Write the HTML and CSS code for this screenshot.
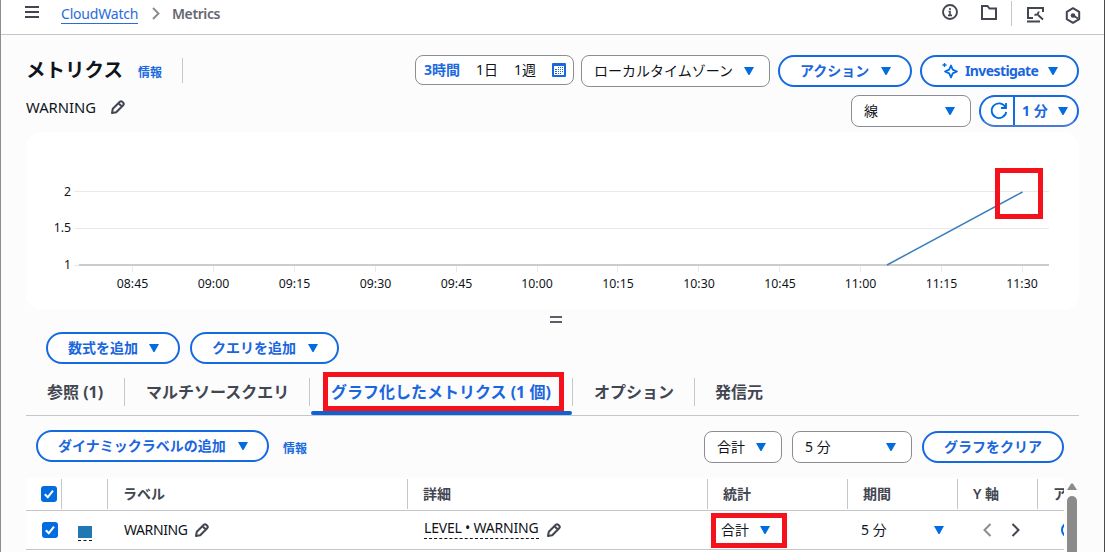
FILE: index.html
```
<!DOCTYPE html>
<html lang="ja">
<head>
    <meta charset="UTF-8">
    <meta name="viewport" content="width=device-width, initial-scale=1.0">
    <title>CloudWatch Metrics</title>
    <link rel="stylesheet" href="styles.css">
</head>
<body>
    <!-- Shared icons -->
    <svg class="sprite" width="0" height="0">
        <symbol id="caret" viewBox="0 0 10 8"><path d="M0 0h10L5.8 7.4q-.8 1-1.6 0z" fill="#006ce0"/></symbol>
        <symbol id="pencil" viewBox="0 0 16 16"><path d="M2 14l.8-4.2 7-7a1.7 1.7 0 0 1 2.4 0l1 1a1.7 1.7 0 0 1 0 2.4l-7 7zM8.5 4.2l3.3 3.3" fill="none" stroke="#424650" stroke-width="2" stroke-linejoin="round"/></symbol>
        <symbol id="check" viewBox="0 0 16 16"><path d="M3.8 8.2l3 3 5.2-6.6" fill="none" stroke="#fff" stroke-width="2"/></symbol>
    </svg>

    <div class="app">
        <header class="topbar">
            <svg class="menu" width="14" height="12" viewBox="0 0 14 12"><path d="M0 1h14M0 6h14M0 11h14" stroke="#424650" stroke-width="2"/></svg>
            <a class="crumb-link">CloudWatch</a>
            <svg class="crumb-arrow" width="8" height="13" viewBox="0 0 8 13"><path d="M1 1l5.5 5.5L1 12" fill="none" stroke="#8c8c94" stroke-width="2"/></svg>
            <span class="crumb-current">Metrics</span>
            <div class="top-icons">
                <svg class="icon-info" width="16" height="16" viewBox="0 0 16 16"><circle cx="8" cy="8" r="7" fill="none" stroke="#424650" stroke-width="1.9"/><path d="M8 4v2M6.5 7.5H8V11M6 11.4h4" fill="none" stroke="#424650" stroke-width="1.6"/></svg>
                <svg class="icon-folder" width="16" height="15" viewBox="0 0 16 15"><path d="M1 1h5.5l2 2.5H15V14H1z" fill="none" stroke="#424650" stroke-width="2"/></svg>
                <span class="top-divider"></span>
                <svg class="icon-screen" width="17" height="17" viewBox="0 0 17 17"><path d="M6 12H1V2h15v4M0 15.500h13" fill="none" stroke="#424650" stroke-width="2"/><path d="M11 9l5 4.500M7.500 8.500a2.800 2.800 0 0 0 4-3" fill="none" stroke="#424650" stroke-width="2"/></svg>
                <svg class="icon-hex" width="16" height="17" viewBox="0 0 16 17"><path d="M8 1.200l6.200 3.600v7.400L8 15.800l-6.200-3.600V4.800z" fill="none" stroke="#424650" stroke-width="2" stroke-linejoin="round"/><circle cx="8" cy="8.500" r="2.300" fill="#424650"/><path d="M8 8.500l5 3" stroke="#424650" stroke-width="2"/></svg>
            </div>
        </header>

        <main class="content">
            <div class="title-row">
                <h1>メトリクス</h1>
                <a class="info">情報</a>
                <span class="title-divider"></span>
                <div class="range">
                    <span class="range-item range-on">3時間</span>
                    <span class="range-item">1日</span>
                    <span class="range-item">1週</span>
                    <svg width="14" height="14" viewBox="0 0 14 14"><rect width="14" height="14" rx="1" fill="#1a66de"/><path d="M2 3h10v9H2z" fill="#fff"/><path d="M6 4h1v1H6zM8 4h1v1H8zM10 4h1v1h-1zM3 6h2v1H3zM6 6h1v1H6zM8 6h1v1H8zM10 6h1v1h-1zM3 8h2v1H3zM6 8h1v1H6zM8 8h1v1H8zM10 8h1v1h-1zM3 10h2v1H3zM6 10h1v1H6zM8 10h1v1H8z" fill="#1a66de"/></svg>
                </div>
                <div class="select select-zone">ローカルタイムゾーン<svg class="caret"><use href="#caret"/></svg></div>
                <button class="button button-action">アクション<svg class="caret"><use href="#caret"/></svg></button>
                <button class="button button-investigate">
                    <svg class="spark" width="17" height="16" viewBox="0 0 17 16"><path d="M9 2.500l1.700 4.200L15 8.500l-4.300 1.800L9 14.500l-1.800-4.200L3 8.500l4.200-1.800z" fill="none" stroke="#006ce0" stroke-width="1.800" stroke-linejoin="round"/><path d="M2.500 0v4M.5 2h4" stroke="#006ce0" stroke-width="1.300"/></svg>
                    <span class="investigate-text">Investigate</span><svg class="caret"><use href="#caret"/></svg>
                </button>
            </div>

            <div class="name-row">
                <span class="graph-name">WARNING</span>
                <svg class="pencil"><use href="#pencil"/></svg>
                <div class="select select-type">線<svg class="caret"><use href="#caret"/></svg></div>
                <div class="refresh">
                    <span class="refresh-icon"><svg width="18" height="18" viewBox="0 0 18 18"><path d="M15.300 5A7.300 7.300 0 1 0 16.200 10M16 1v5h-5" fill="none" stroke="#006ce0" stroke-width="1.800"/></svg></span>
                    <span class="refresh-time">1 分<svg class="caret"><use href="#caret"/></svg></span>
                </div>
            </div>

            <!-- Graph -->
            <div class="chart">
                <svg width="1053" height="178" viewBox="0 0 1053 178">
                    <path class="grid" d="M48 59.500h975M48 96.500h975M48 133.500h5"/>
                    <path class="grid" d="M106.500 134v6M187.500 134v6M268.500 134v6M349.500 134v6M430.500 134v6M511.500 134v6M591.500 134v6M672.500 134v6M753.500 134v6M834.500 134v6M915.500 134v6M996.500 134v6"/>
                    <path class="axis" d="M53 133h970"/>
                    <path class="series" d="M861 133L996.500 60"/>
                    <g class="y-labels">
                        <text x="45" y="64">2</text>
                        <text x="45" y="100">1.5</text>
                        <text x="45" y="137">1</text>
                    </g>
                    <g class="x-labels">
                        <text x="106.500" y="156">08:45</text>
                        <text x="187.500" y="156">09:00</text>
                        <text x="268.500" y="156">09:15</text>
                        <text x="349.500" y="156">09:30</text>
                        <text x="430.500" y="156">09:45</text>
                        <text x="511" y="156">10:00</text>
                        <text x="592" y="156">10:15</text>
                        <text x="673" y="156">10:30</text>
                        <text x="754" y="156">10:45</text>
                        <text x="834.500" y="156">11:00</text>
                        <text x="915.500" y="156">11:15</text>
                        <text x="996" y="156">11:30</text>
                    </g>
                </svg>
                <span class="mark mark-point"></span>
            </div>

            <div class="handle"><span></span></div>

            <div class="add-row">
                <button class="button button-math">数式を追加<svg class="caret"><use href="#caret"/></svg></button>
                <button class="button button-query">クエリを追加<svg class="caret"><use href="#caret"/></svg></button>
            </div>

            <nav class="tabs">
                <a class="tab tab-browse">参照 (1)</a>
                <a class="tab tab-multi">マルチソースクエリ</a>
                <a class="tab tab-graphed tab-active">グラフ化したメトリクス (1 個)<span class="mark mark-tab"></span></a>
                <a class="tab tab-options">オプション</a>
                <a class="tab tab-source">発信元</a>
            </nav>

            <div class="tools">
                <button class="button button-label">ダイナミックラベルの追加<svg class="caret"><use href="#caret"/></svg></button>
                <a class="info">情報</a>
                <div class="select select-stat">合計<svg class="caret"><use href="#caret"/></svg></div>
                <div class="select select-period">5 分<svg class="caret"><use href="#caret"/></svg></div>
                <button class="button button-clear">グラフをクリア</button>
            </div>

            <div class="table-wrap">
                <div class="table">
                    <div class="row row-head">
                        <div class="cell cell-check"><svg class="checkbox"><use href="#check"/></svg></div>
                        <div class="cell"></div>
                        <div class="cell">ラベル</div>
                        <div class="cell">詳細</div>
                        <div class="cell">統計</div>
                        <div class="cell">期間</div>
                        <div class="cell">Y 軸</div>
                        <div class="cell">ア</div>
                    </div>
                    <div class="row">
                        <div class="cell cell-check"><svg class="checkbox"><use href="#check"/></svg></div>
                        <div class="cell"><span class="swatch"></span></div>
                        <div class="cell"><span class="label">WARNING</span><svg class="pencil"><use href="#pencil"/></svg></div>
                        <div class="cell"><span class="detail">LEVEL • WARNING</span><svg class="pencil"><use href="#pencil"/></svg></div>
                        <div class="cell cell-stat">合計<svg class="caret"><use href="#caret"/></svg><span class="mark mark-stat"></span></div>
                        <div class="cell cell-period">5 分<svg class="caret"><use href="#caret"/></svg></div>
                        <div class="cell cell-axis">
                            <svg width="9" height="14" viewBox="0 0 9 14"><path d="M7.500 1l-6 6 6 6" fill="none" stroke="#8c8c94" stroke-width="2"/></svg>
                            <svg width="9" height="14" viewBox="0 0 9 14"><path d="M1.500 1l6 6-6 6" fill="none" stroke="#424650" stroke-width="2"/></svg>
                        </div>
                        <div class="cell cell-more"><svg width="16" height="16" viewBox="0 0 16 16"><circle cx="8" cy="8" r="7" fill="none" stroke="#006ce0" stroke-width="2"/></svg></div>
                    </div>
                </div>
                <div class="scrollbar">
                    <svg width="10" height="7" viewBox="0 0 10 7"><path d="M0 7L4 .8q1-1.300 2 0L10 7z" fill="#8b8b8b"/></svg>
                    <span class="thumb"></span>
                </div>
            </div>
        </main>
    </div>
</body>
</html>
```
FILE: styles.css
```
* {
    margin: 0;
    padding: 0;
    box-sizing: border-box;
}

body {
    height: 552px;
    overflow: hidden;
    background: #fcfcfd;
    color: #0f141a;
    font-family: "Noto Sans", "Noto Sans CJK JP", sans-serif;
    font-size: 14px;
    line-height: 20px;
}

svg {
    display: block;
    flex: none;
}

.sprite {
    position: absolute;
}

.app {
    height: 552px;
    overflow: hidden;
    border-left: 1px solid #8d8d90;
    border-right: 1px solid #4a4a4d;
}

/* Top bar */
.topbar {
    display: flex;
    align-items: flex-start;
    height: 35px;
    padding: 0 24px;
    background: #fff;
    border-bottom: 1px solid #c6c6cd;
}

.menu {
    margin-top: 6px;
}

.crumb-link {
    width: 77px;
    height: 20px;
    margin: 4px 0 0 22px;
    color: #2a6bdd;
    border-bottom: 1px solid #2a6bdd;
    letter-spacing: -0.2px;
    white-space: nowrap;
}

.crumb-arrow {
    margin: 7px 12px 0 14px;
}

.crumb-current {
    margin-top: 4px;
    color: #656871;
    font-weight: 600;
    letter-spacing: -0.4px;
}

.top-icons {
    display: flex;
    margin-left: auto;
}

.icon-info {
    margin: 4px 23px 0 0;
}

.icon-folder {
    margin: 5px 14px 0 0;
}

.top-divider {
    width: 1px;
    height: 25px;
    margin: 1px 15px 0 0;
    background: #c6c6cd;
}

.icon-screen {
    margin: 6px 21px 0 0;
}

.icon-hex {
    margin: 7px -1px 0 0;
}

.content {
    padding: 20px 25px 0;
}

/* Buttons and selects */
.button {
    display: flex;
    align-items: center;
    justify-content: space-between;
    flex: none;
    height: 32px;
    padding: 0 19px 0 20px;
    background: #fff;
    border: 2px solid #146ae0;
    border-radius: 16px;
    color: #1a66de;
    font: inherit;
    font-weight: 700;
    white-space: nowrap;
}

.select {
    display: flex;
    align-items: center;
    justify-content: space-between;
    flex: none;
    height: 32px;
    padding: 0 15px 0 12px;
    background: #fff;
    border: 1px solid #8c8c94;
    border-radius: 8px;
    white-space: nowrap;
}

.caret {
    width: 10px;
    height: 8px;
}

.pencil {
    width: 16px;
    height: 16px;
}

.info {
    color: #1a6ae0;
    font-size: 12px;
    font-weight: 700;
}

/* Title */
.title-row {
    display: flex;
    height: 40px;
}

h1 {
    width: 98px;
    margin: 3px 14px 0 0;
    font-size: 19.5px;
    line-height: 24px;
    white-space: nowrap;
}

.title-row .info {
    width: 24px;
    margin-top: 8px;
}

.title-divider {
    width: 1px;
    height: 25px;
    margin: 3px auto 0 20px;
    background: #c6c6cd;
}

.range {
    display: flex;
    align-items: center;
    gap: 16px;
    width: 159px;
    height: 30px;
    padding-left: 8px;
    background: #fff;
    border: 1px solid #8c8c94;
    border-radius: 8px;
    white-space: nowrap;
}

.range-on {
    color: #1a6ae0;
    font-weight: 700;
}

.select-zone {
    width: 189px;
    margin: 0 8px 0 7px;
}

.button-action {
    width: 134px;
    margin-right: 8px;
}

.button-investigate {
    width: 159px;
}

.investigate-text {
    width: 73px;
    letter-spacing: -0.6px;
}

.spark {
    margin-right: -4px;
}

.name-row {
    display: flex;
    height: 36px;
}

.graph-name {
    margin: 2px 14px 0 0;
    font-size: 14.8px;
}

.name-row .pencil {
    margin-top: 4px;
}

.select-type {
    width: 120px;
    margin: 0 8px 0 auto;
}

.refresh {
    display: flex;
    width: 100px;
    height: 32px;
    background: #fff;
    border: 2px solid #146ae0;
    border-bottom-color: #4a7ad8;
    border-radius: 16px;
    color: #1a66de;
    font-weight: 700;
}

.refresh-icon {
    width: 34px;
    padding: 5px 0 0 9px;
    border-right: 2px solid #146ae0;
}

.refresh-time {
    display: flex;
    align-items: center;
    justify-content: space-between;
    flex: 1;
    padding: 0 9px 0 7px;
}

/* Chart */
.chart {
    position: relative;
    height: 178px;
    margin-top: 1px;
    background: #fff;
    border-radius: 16px;
}

.chart text {
    font-size: 12.3px;
    fill: #0f141a;
}

.grid {
    stroke: #e9e9eb;
}

.axis {
    stroke: #ccc;
    stroke-width: 2;
}

.series {
    fill: none;
    stroke: #3a7fbd;
    stroke-width: 1.5;
}

.x-labels {
    text-anchor: middle;
}

.y-labels {
    text-anchor: end;
}

/* Red highlight frames */
.mark {
    position: absolute;
    border: 5px solid #f5121d;
}

.mark-point {
    top: 36px;
    left: 969px;
    width: 48px;
    height: 51px;
}

.mark-tab {
    top: -6px;
    left: 13px;
    width: 241px;
    height: 39px;
}

.mark-stat {
    top: 2px;
    left: 3px;
    width: 76px;
    height: 35px;
}

.handle {
    height: 22px;
    padding: 6px 0 0 524px;
}

.handle span {
    display: block;
    width: 12px;
    height: 7px;
    border: solid #5b5e66;
    border-width: 2px 0;
}

.add-row {
    display: flex;
    gap: 10px;
    padding-left: 20px;
}

.button-math {
    width: 134px;
}

.button-query {
    width: 149px;
}

/* Tabs */
.tabs {
    display: flex;
    height: 38px;
    margin-top: 14px;
    border-bottom: 1px solid #c6c6cd;
}

.tab {
    position: relative;
    height: 28px;
    border-right: 1px solid #c6c6cd;
    color: #424650;
    font-size: 16px;
    font-weight: 700;
    line-height: 28px;
    white-space: nowrap;
}

.tab-browse {
    width: 99px;
    padding-left: 21px;
}

.tab-multi {
    width: 185px;
    padding-left: 21px;
}

.tab-graphed {
    width: 263px;
    padding-left: 21px;
}

.tab-options {
    width: 122px;
    padding-left: 21px;
}

.tab-source {
    padding-left: 20px;
    border-right: none;
}

.tab-active {
    color: #1a66de;
}

.tab-active::after {
    content: "";
    position: absolute;
    left: 1px;
    top: 33px;
    width: 261px;
    height: 4px;
    background: #0f62d0;
    border-radius: 2px;
}

.tools {
    display: flex;
    align-items: center;
    height: 32px;
    margin: 15px 15px 0 10px;
}

.button-label {
    width: 233px;
    margin: -2px 14px 0 0;
}

.tools .info {
    margin-top: 3px;
}

.select-stat {
    width: 78px;
    margin: 0 10px 0 auto;
}

.select-period {
    width: 120px;
    margin-right: 10px;
}

.button-clear {
    width: 142px;
}

/* Table */
.table-wrap {
    display: flex;
    margin-top: 15px;
}

.table {
    flex: none;
    width: 1038px;
    overflow: hidden;
    background: #fff;
}

.row {
    display: grid;
    grid-template-columns: 36px 46px 300px 300px 140px 110px 80px 80px;
    height: 39px;
    border-bottom: 1px solid #c6c6cd;
}

.cell {
    position: relative;
    display: flex;
    align-items: center;
    padding-left: 16px;
    white-space: nowrap;
}

.row-head {
    height: 33px;
    padding: 1px 0;
    color: #424650;
    font-weight: 600;
}

.row-head .cell {
    padding-left: 15px;
    border-right: 1px solid #c6c6cd;
}

.checkbox {
    width: 16px;
    height: 16px;
    background: #006ce0;
    border-radius: 3px;
}

.swatch {
    width: 14px;
    height: 15px;
    margin-top: 6px;
    background: linear-gradient(#1f77b4, #1f77b4) 0 0 / 14px 12px no-repeat;
    border-bottom: 1px dashed #0f141a;
}

.cell .pencil {
    margin-left: 7px;
}

.label {
    width: 63px;
    letter-spacing: -0.4px;
}

.detail {
    width: 115px;
    height: 20px;
    margin-top: -3px;
    line-height: 18px;
    letter-spacing: -0.2px;
    border-bottom: 1px dashed #0f141a;
}

.cell-stat,
.cell-period {
    padding-left: 13px;
}

.cell-stat .caret {
    margin-left: 11px;
}

.cell-period {
    justify-content: space-between;
    padding-right: 14px;
}

.cell-axis {
    gap: 19px;
    padding-left: 25px;
}

.cell-more {
    padding-left: 23px;
}

.scrollbar {
    width: 10px;
    margin-left: 3px;
    padding-top: 5px;
}

.thumb {
    display: block;
    width: 10px;
    height: 70px;
    margin-top: 6px;
    background: #8b8b8b;
    border-radius: 5px;
}
```
